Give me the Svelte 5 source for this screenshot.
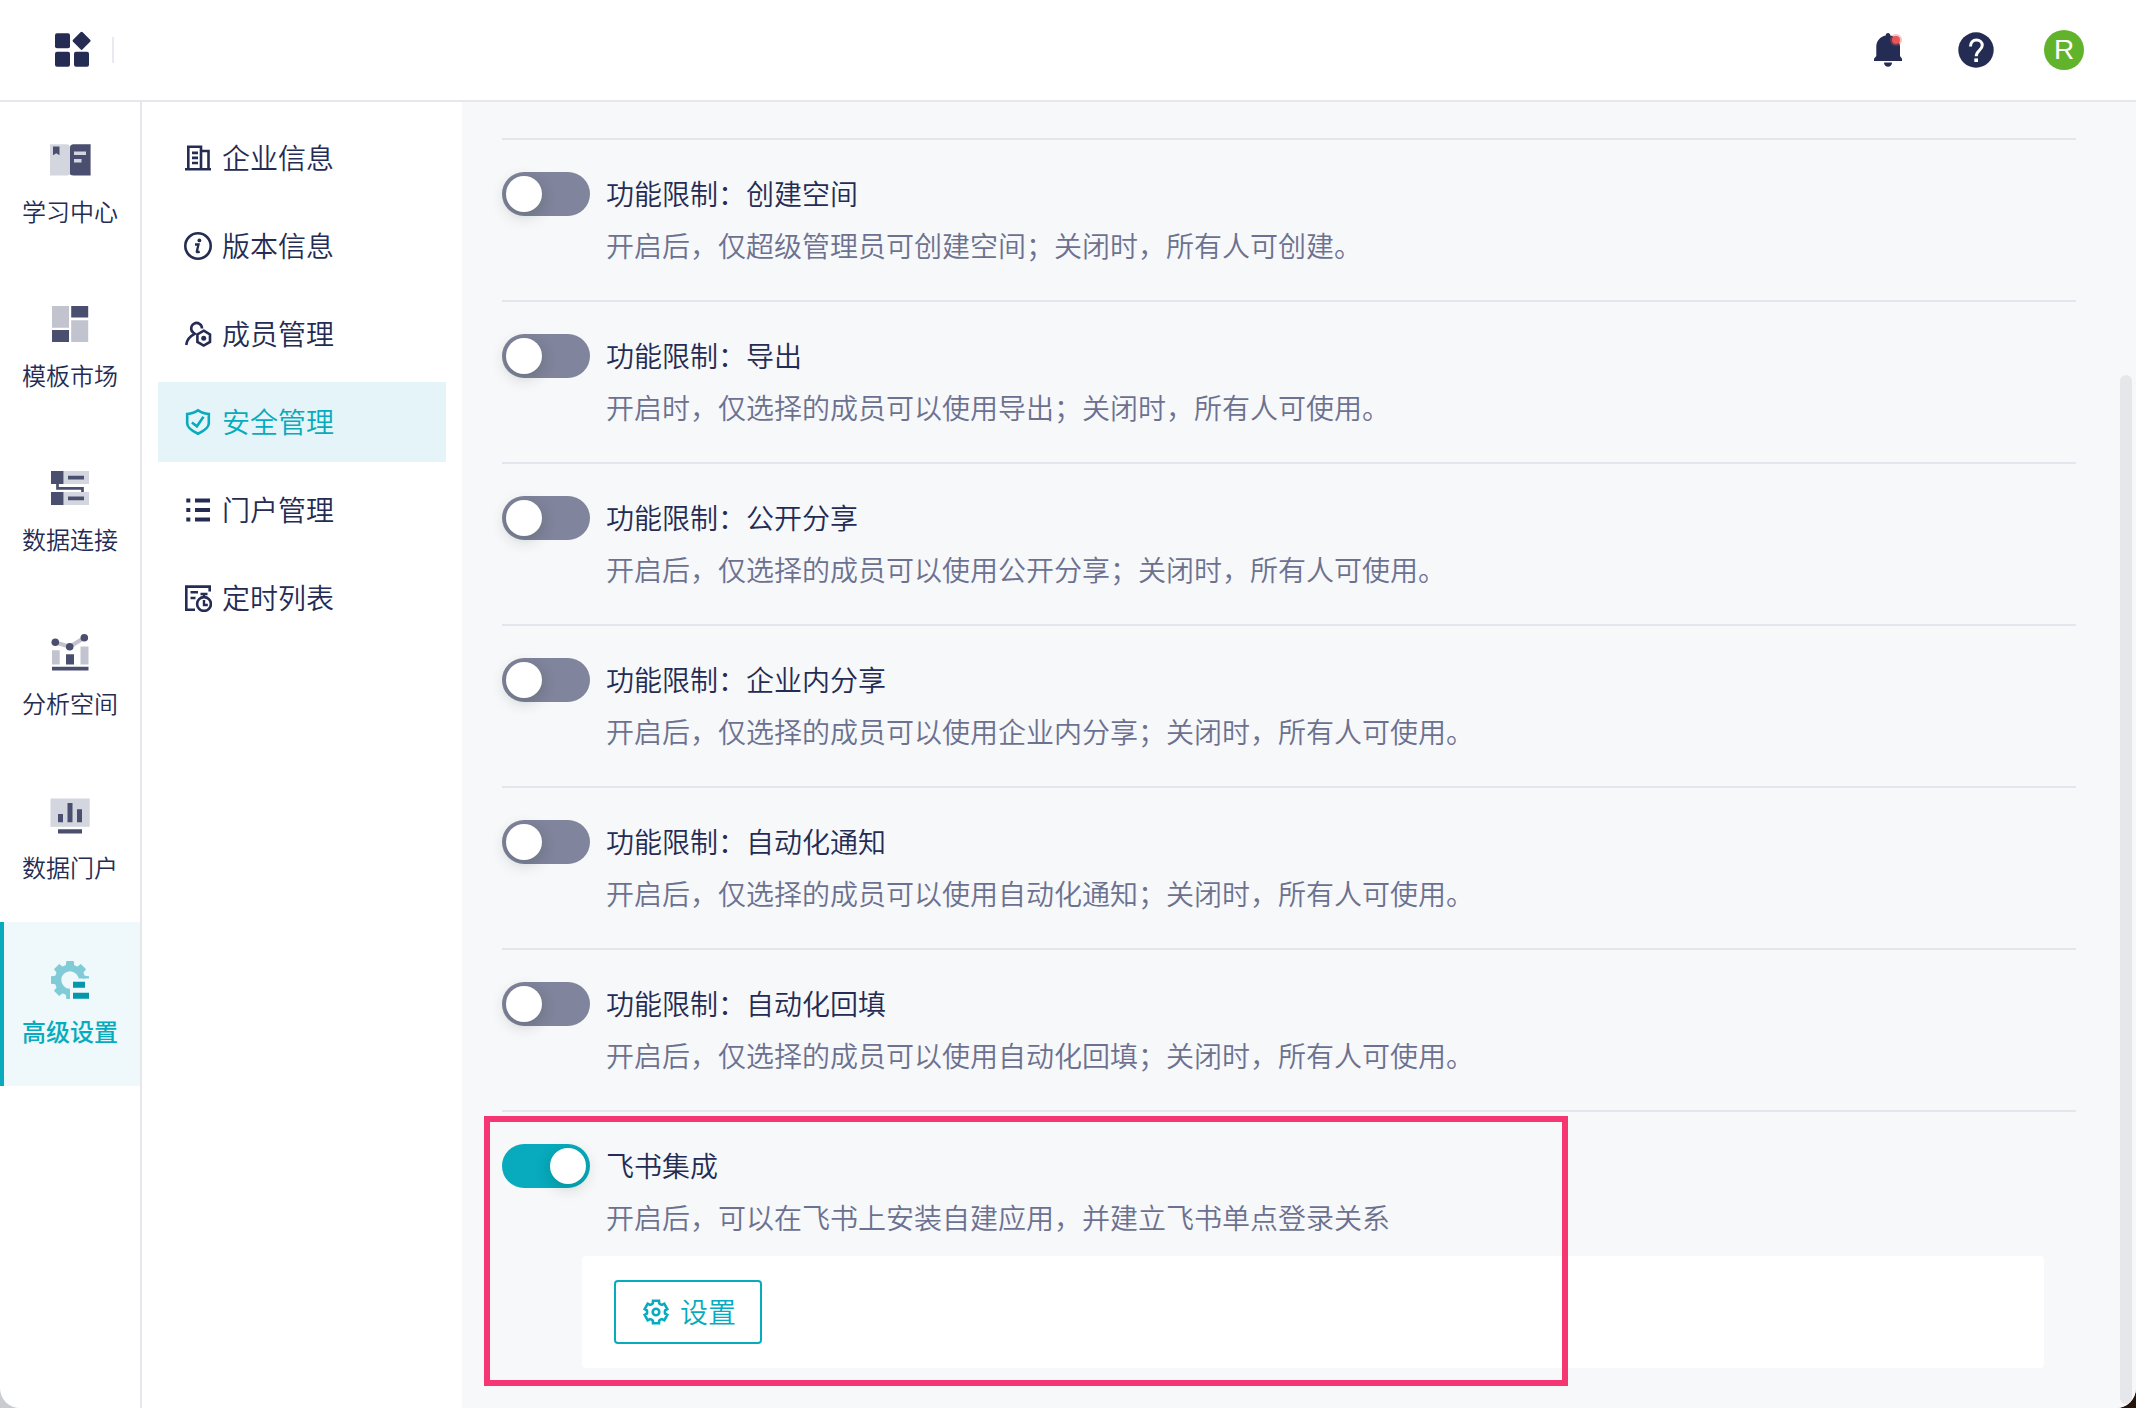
<script lang="ts">
    type NavItem = { icon: string; label: string };
    type Setting = { id: string; title: string; desc: string; on: boolean };

    const railItems: NavItem[] = [
        { icon: 'book', label: '学习中心' },
        { icon: 'template', label: '模板市场' },
        { icon: 'connect', label: '数据连接' },
        { icon: 'analysis', label: '分析空间' },
        { icon: 'portal', label: '数据门户' },
        { icon: 'settings', label: '高级设置' }
    ];

    const menuItems: NavItem[] = [
        { icon: 'company', label: '企业信息' },
        { icon: 'version', label: '版本信息' },
        { icon: 'member', label: '成员管理' },
        { icon: 'security', label: '安全管理' },
        { icon: 'list', label: '门户管理' },
        { icon: 'schedule', label: '定时列表' }
    ];

    let activeRail = $state('settings');
    let activeMenu = $state('security');

    let settings = $state<Setting[]>([
        { id: 'space', title: '功能限制：创建空间', desc: '开启后，仅超级管理员可创建空间；关闭时，所有人可创建。', on: false },
        { id: 'export', title: '功能限制：导出', desc: '开启时，仅选择的成员可以使用导出；关闭时，所有人可使用。', on: false },
        { id: 'share', title: '功能限制：公开分享', desc: '开启后，仅选择的成员可以使用公开分享；关闭时，所有人可使用。', on: false },
        { id: 'inner', title: '功能限制：企业内分享', desc: '开启后，仅选择的成员可以使用企业内分享；关闭时，所有人可使用。', on: false },
        { id: 'notify', title: '功能限制：自动化通知', desc: '开启后，仅选择的成员可以使用自动化通知；关闭时，所有人可使用。', on: false },
        { id: 'backfill', title: '功能限制：自动化回填', desc: '开启后，仅选择的成员可以使用自动化回填；关闭时，所有人可使用。', on: false },
        { id: 'feishu', title: '飞书集成', desc: '开启后，可以在飞书上安装自建应用，并建立飞书单点登录关系', on: true }
    ]);

    // outline of a six-toothed gear, centred on 14,14
    function gearOutline(outer: number, inner: number) {
        const points: string[] = [];
        for (let i = 0; i < 6; i++) {
            for (const [offset, r] of [[-15, outer], [15, outer], [20, inner + 0.5], [30, inner], [40, inner + 0.5]]) {
                const a = ((i * 60 + offset - 90) * Math.PI) / 180;
                points.push(`${(14 + r * Math.cos(a)).toFixed(1)} ${(14 + r * Math.sin(a)).toFixed(1)}`);
            }
        }
        return `M${points.join('L')}Z`;
    }
</script>

<div class="app">
    <header class="topbar">
        <button class="icon-btn" aria-label="应用">
            <svg width="40" height="40" viewBox="0 0 40 40" fill="#242c54">
                <rect x="3" y="3.3" width="15" height="15" rx="2" />
                <rect x="3" y="21.8" width="15" height="15" rx="2" />
                <rect x="22" y="21.8" width="15" height="15" rx="2" />
                <rect x="22.8" y="4" width="13.6" height="13.6" rx="1.5" transform="rotate(45 29.6 10.8)" />
            </svg>
        </button>
        <span class="divider"></span>
        <div class="topbar-right">
            <button class="icon-btn" aria-label="消息">
                <svg width="40" height="40" viewBox="0 0 40 40" fill="#242c54">
                    <path d="M20 3c1.400 0 2.300 1 2.300 2.400C28 6.500 32 11 32 16.500V26l2 2.700V31H6v-2.300L8.300 26v-9.500C8.300 11 12 6.500 17.700 5.400 17.700 4 18.600 3 20 3z" />
                    <path d="M16 32.500h8a4 4.300 0 0 1-8 0z" />
                    <circle cx="28" cy="10" r="6" fill="#e95454" opacity=".35" />
                    <circle cx="28" cy="10" r="4" fill="#e95454" />
                </svg>
            </button>
            <button class="icon-btn" aria-label="帮助">
                <svg width="40" height="40" viewBox="0 0 40 40">
                    <circle cx="20" cy="20" r="17.700" fill="#242c54" />
                    <path d="M14.500 16.500C14.500 12.300 16.900 10 20.400 10S26.300 12.300 26.300 15.300C26.300 19.800 20.200 20.800 20.200 26.300" fill="none" stroke="#fff" stroke-width="3" />
                    <rect x="18.300" y="28.400" width="3.700" height="3.600" fill="#fff" />
                </svg>
            </button>
            <button class="avatar" aria-label="账户">R</button>
        </div>
    </header>

    <div class="body">
        <nav class="rail">
            {#each railItems as item (item.icon)}
                <a
                    href="#{item.icon}"
                    class="rail-item"
                    class:active={activeRail === item.icon}
                    onclick={() => (activeRail = item.icon)}
                >
                    <svg class="rail-icon" viewBox="0 0 48 48" fill="#4a4f70" aria-hidden="true">
                        {#if item.icon === 'book'}
                            <path d="M4 8.300h16.500q3.500.3 3.500 3v26.500q0 1.500-3 1.700H4z" fill="#d3d6df" />
                            <path d="M44.600 8.300H27.500q-3.500.3-3.500 3v26.500q0 1.700 3.500 1.700h17.100z" />
                            <path d="M7 10.500h6.500v8.700l-3.200-2-3.300 2z" />
                            <path d="M28 15.500h12v3.500H28zM28 23h7.500v3.500H28z" fill="#d3d6df" />
                        {:else if item.icon === 'template'}
                            <path d="M6 6h17v21.700H6zM25.200 20.200h17V42h-17z" fill="#c1c3cf" />
                            <path d="M6 30h17v12H6zM25.200 6h17v11.500h-17z" />
                        {:else if item.icon === 'connect'}
                            <path d="M17.500 7H43v13H17.500zM17.500 28H43v13H17.500z" fill="#d3d6df" />
                            <path d="M5 7h12.500v13H5zM5 28h12.500v13H5zM22 11.700h16v3.800H22zM22 32.500h16v3.800H22z" />
                            <path d="M11.500 20v4.300h25V28" fill="none" stroke="#4a4f70" stroke-width="2.700" />
                        {:else if item.icon === 'analysis'}
                            <path d="M9.300 14.300l14.400 4.400 14.600-9" fill="none" stroke="#c1c3cf" stroke-width="4" />
                            <path d="M6 22.300h7.700v14.200H6zM34.500 18.500h8v18h-8z" fill="#c1c3cf" />
                            <path d="M20 26.300h8v10.200h-8zM6 38.700h36.500v3.800H6z" />
                            <circle cx="9.300" cy="14.300" r="3.800" />
                            <circle cx="23.700" cy="18.700" r="3.800" />
                            <circle cx="38.300" cy="9.700" r="3.800" />
                        {:else if item.icon === 'portal'}
                            <rect x="4.500" y="6.500" width="39.200" height="28.300" fill="#d3d6df" />
                            <path d="M12 22h5v8.300h-5zM21.500 11h5v19.300h-5zM31 17.300h5v13h-5zM12 37.200h24v4.300H12z" />
                        {:else}
                            <clipPath id="gear-cut">
                                <path d="M0 0h48v22.500H24V48H0z" />
                            </clipPath>
                            <g clip-path="url(#gear-cut)" fill="#80cbd6">
                                <circle cx="24" cy="24" r="12" fill="none" stroke="#80cbd6" stroke-width="6.600" />
                                {#each [0, 45, 90, 180, 225, 270, 315] as angle (angle)}
                                    <path d="M20.300 5h7.400l.8 6.500h-9z" transform="rotate({angle} 24 24)" />
                                {/each}
                            </g>
                            <path d="M27 25.700h12v6H27zM27 36.700h16v6H27z" fill="#0297aa" />
                        {/if}
                    </svg>
                    <span>{item.label}</span>
                </a>
            {/each}
        </nav>

        <nav class="menu">
            {#each menuItems as item (item.icon)}
                <a
                    href="#{item.icon}"
                    class="menu-item"
                    class:active={activeMenu === item.icon}
                    onclick={() => (activeMenu = item.icon)}
                >
                    <svg class="line-icon" viewBox="0 0 28 28" aria-hidden="true">
                        {#if item.icon === 'company'}
                            <path d="M1 25.300h26M4.300 25V2.800H17V25M17 7h7.500v18M8 8.900h6M8 13.900h6M8 19h6" />
                        {:else if item.icon === 'version'}
                            <circle cx="14" cy="14" r="12.700" />
                            <circle cx="15.400" cy="8.400" r="1.900" class="solid" />
                            <path d="M11 12.500h3.500l-1.700 7q-.2 1.300 2.900.2" stroke-width="2.300" />
                        {:else if item.icon === 'member'}
                            <path d="M9.500 12.800A5.400 5.400 0 1 1 18 8.500M9.500 12.800l1.200 1Q3 17.500 2.200 25" />
                            <path d="M19.700 10.700l6.300 3.700v7.500l-6.300 3.700-6.300-3.700v-7.500z" />
                            <circle cx="19.700" cy="18.200" r="2.500" class="solid" />
                        {:else if item.icon === 'security'}
                            <path d="M14 2.300Q18 5.400 24.800 6v9.500c0 4.500-5 7.500-10.800 10.200C8.200 23 3.200 20 3.200 15.500V6Q10 5.400 14 2.300z" />
                            <path d="M7.900 14.500l5 3.800 6.600-9.600" />
                        {:else if item.icon === 'list'}
                            <path d="M2.300 4.500h4M2.300 14h4M2.300 23.500h4M11 4.500h15M11 14h15M11 23.500h15" stroke-width="4" />
                        {:else}
                            <path d="M25.700 7.500V2.600H2.300v23.200H11M6.500 8.300h7.500M6.500 14h5" />
                            <path d="M16.500 10h7M20 10v3M20 16v5h3.800" stroke-width="2.400" />
                            <circle cx="20" cy="20" r="6.900" />
                        {/if}
                    </svg>
                    <span class="icon-label">{item.label}</span>
                </a>
            {/each}
        </nav>

        <main class="content">
            {#each settings as item (item.id)}
                <section class="setting">
                    <input class="switch" type="checkbox" role="switch" id={item.id} bind:checked={item.on} />
                    <div class="setting-text">
                        <label for={item.id}>{item.title}</label>
                        <p>{item.desc}</p>
                    </div>
                    {#if item.id === 'feishu'}
                        {#if item.on}
                            <div class="panel">
                                <button class="btn-config">
                                    <svg class="line-icon" viewBox="0 0 28 28" aria-hidden="true">
                                        <path d={gearOutline(11.7, 8.8)} />
                                        <circle cx="14" cy="14" r="3.300" />
                                    </svg>
                                    <span class="icon-label">设置</span>
                                </button>
                            </div>
                        {/if}
                        <div class="highlight"></div>
                    {/if}
                </section>
            {/each}
            <div class="scroll-thumb"></div>
        </main>
    </div>
</div>

<style>
    :global(body) {
        margin: 0;
        background: linear-gradient(90deg, #c9cbd0 50%, #24140c 50%);
    }

    .app {
        display: flex;
        flex-direction: column;
        min-height: 100vh;
        overflow: hidden;
        border-radius: 0 0 20px 20px;
        background: #fff;
        color: #242c54;
        font-family: "Noto Sans CJK SC", sans-serif;
        font-size: 28px;
        font-weight: 350;
        line-height: 42px;
    }

    a {
        color: inherit;
        text-decoration: none;
    }

    button {
        padding: 0;
        border: none;
        background: none;
        font: inherit;
        cursor: pointer;
    }

    .topbar {
        display: flex;
        align-items: center;
        height: 100px;
        padding: 0 52px;
        border-bottom: 2px solid #e6e7ed;
    }

    .icon-btn {
        width: 40px;
        height: 40px;
    }

    .icon-btn svg {
        display: block;
    }

    .divider {
        width: 2px;
        height: 26px;
        margin-left: 20px;
        background: #e9eaf0;
    }

    .topbar-right {
        display: flex;
        gap: 48px;
        margin-left: auto;
    }

    .avatar {
        width: 40px;
        height: 40px;
        border-radius: 50%;
        background: #61b32b;
        color: #fff;
        font-family: "Liberation Sans", sans-serif;
        line-height: 40px;
    }

    .body {
        display: flex;
        flex: 1;
    }

    .rail {
        flex: none;
        width: 140px;
        border-right: 2px solid #e6e7ed;
    }

    .rail-item {
        display: flex;
        flex-direction: column;
        align-items: center;
        gap: 12px;
        box-sizing: border-box;
        height: 164px;
        padding-top: 34px;
        font-size: 24px;
        line-height: 30px;
    }

    .rail-item.active {
        background: #eff8fb;
        box-shadow: inset 4px 0 #07abbd;
        color: #07abbd;
        font-weight: 500;
    }

    .rail-icon {
        width: 48px;
        height: 48px;
    }

    .menu {
        display: flex;
        flex: none;
        flex-direction: column;
        gap: 8px;
        box-sizing: border-box;
        width: 320px;
        padding: 16px;
    }

    .menu-item {
        display: flex;
        align-items: center;
        gap: 10px;
        height: 80px;
        padding: 0 26px;
    }

    .menu-item.active {
        background: #e5f4f8;
        color: #07abbd;
    }

    .line-icon {
        flex: none;
        width: 28px;
        height: 28px;
        fill: none;
        stroke: currentColor;
        stroke-width: 2.6;
    }

    .line-icon .solid {
        fill: currentColor;
        stroke: none;
    }

    .icon-label {
        padding-bottom: 2px;
    }

    .content {
        position: relative;
        flex: 1;
        padding: 36px 60px 40px 40px;
        background: #f7f8fa;
    }

    .setting {
        position: relative;
        display: flex;
        flex-wrap: wrap;
        gap: 16px;
        padding: 32px 0;
        border-top: 2px solid #e4e6ed;
    }

    .setting:last-of-type {
        padding-bottom: 0;
    }

    .setting-text {
        flex: 1;
        padding-bottom: 2px;
    }

    .setting-text label {
        display: block;
        cursor: pointer;
    }

    .setting-text p {
        margin: 10px 0 0;
        color: #6c7190;
    }

    .switch {
        flex: none;
        box-sizing: border-box;
        width: 88px;
        height: 44px;
        margin: 0;
        padding: 4px;
        border-radius: 22px;
        appearance: none;
        background: #80849c;
        cursor: pointer;
    }

    .switch::before {
        content: '';
        display: block;
        width: 36px;
        height: 36px;
        border-radius: 50%;
        background: #fff;
        box-shadow: 0 4px 16px rgba(0, 35, 11, 0.2);
    }

    .switch:checked {
        background: #07abbd;
    }

    .switch:checked::before {
        margin-left: 44px;
    }

    .panel {
        flex-basis: 100%;
        margin: 0 32px 0 80px;
        padding: 24px 32px;
        border-radius: 4px;
        background: #fff;
    }

    .btn-config {
        display: flex;
        align-items: center;
        gap: 10px;
        box-sizing: border-box;
        height: 64px;
        padding: 0 24px 0 26px;
        border: 2px solid #07abbd;
        border-radius: 4px;
        color: #07abbd;
    }

    .highlight {
        position: absolute;
        top: 4px;
        left: -18px;
        box-sizing: border-box;
        width: 1084px;
        height: 270px;
        border: 6px solid #f63672;
        pointer-events: none;
    }

    .scroll-thumb {
        position: absolute;
        top: 273px;
        right: 4px;
        bottom: 4px;
        width: 12px;
        border-radius: 6px;
        background: #e6e7ea;
    }
</style>
